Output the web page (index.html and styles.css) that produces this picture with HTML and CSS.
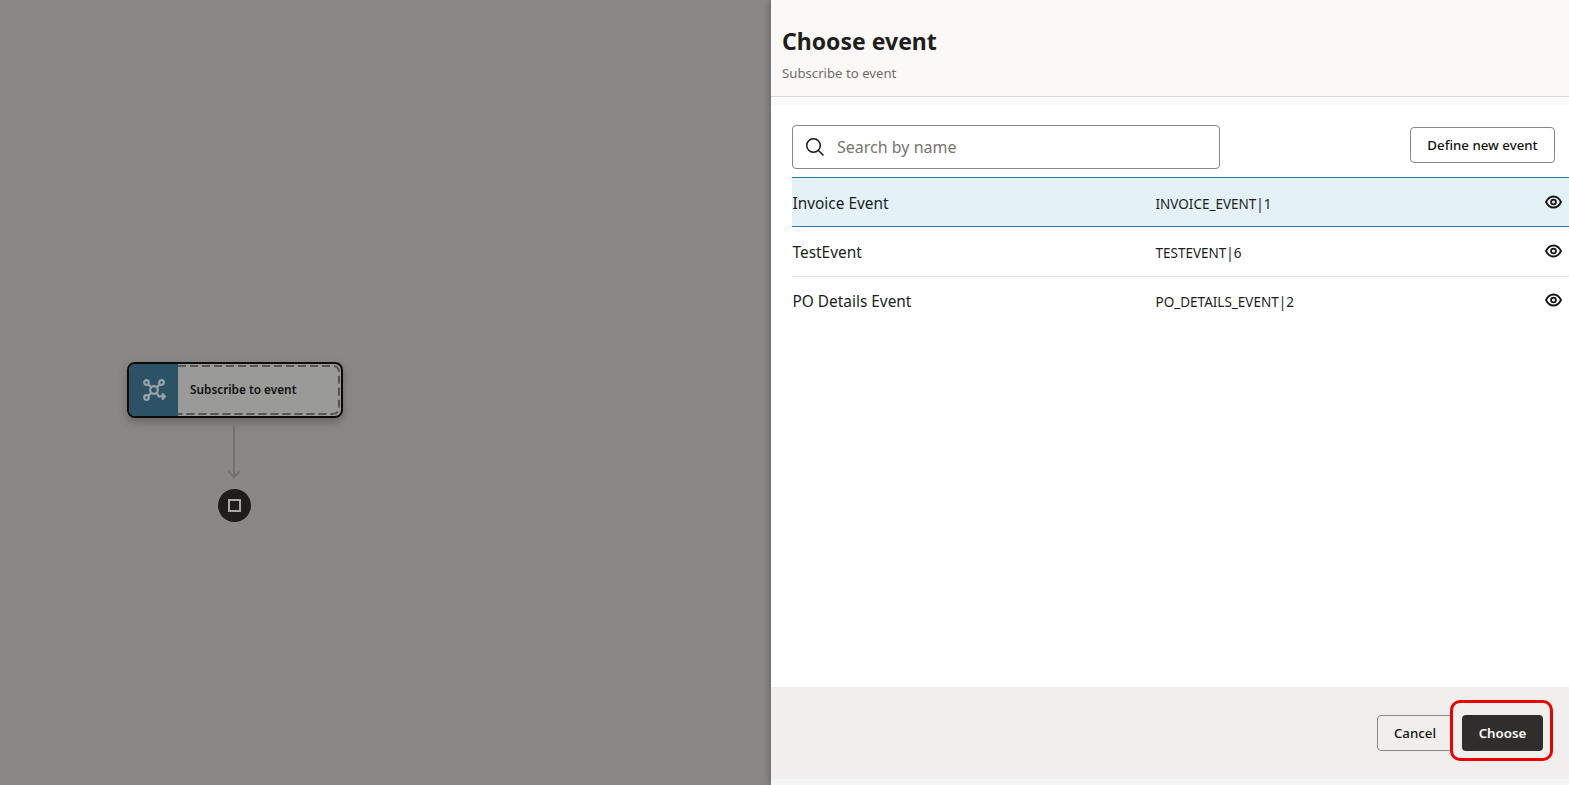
FILE: index.html
```html
<!DOCTYPE html>
<html lang="en">
<head>
<meta charset="utf-8">
<title>Choose event</title>
<link rel="stylesheet" href="styles.css">
</head>
<body>
<div class="app">
  <main class="canvas">
    <div class="node">
      <div class="node-icon">
        <svg width="24" height="24" viewBox="0 0 24 24" fill="none" stroke="#9aa3a6" stroke-width="2.200">
          <circle cx="12" cy="12" r="3.800"/>
          <circle cx="4.500" cy="4.500" r="2.300"/>
          <circle cx="19.500" cy="4.500" r="2.300"/>
          <circle cx="4.500" cy="19.500" r="2.300"/>
          <path d="M6 6l3.400 3.400M18 6l-3.400 3.400M6 18l3.400-3.400M14.600 14.600l2 3.800h6M20 15.500l3 3-3 3"/>
        </svg>
      </div>
      <div class="node-label">
        <svg class="node-dash" width="163" height="52" viewBox="0 0 163 52" fill="none" stroke="#565553" stroke-width="2" stroke-dasharray="8 4">
          <path d="M0 2H155a6 6 0 0 1 6 6V44a6 6 0 0 1-6 6H0"/>
        </svg>
        <span>Subscribe to event</span>
      </div>
    </div>
    <svg class="connector" width="14" height="54" viewBox="0 0 14 54" fill="none" stroke="#737270" stroke-width="2">
      <path d="M7 0v52M1.500 46.500L7 52l5.500-5.500"/>
    </svg>
    <div class="end-node"><span class="end-square"></span></div>
  </main>
  <aside class="panel">
    <header class="panel-head">
      <h1 class="panel-title">Choose event</h1>
      <p class="panel-sub">Subscribe to event</p>
    </header>
    <div class="panel-gap"></div>
    <section class="panel-body">
      <div class="toolbar">
        <label class="search">
          <svg width="20" height="20" viewBox="0 0 20 20" fill="none" stroke="#161513" stroke-width="1.500">
            <circle cx="8.500" cy="8.500" r="6.800"/>
            <path d="M13.500 13.500l5 5"/>
          </svg>
          <span class="search-text">Search by name</span>
        </label>
        <button class="btn btn-define">Define new event</button>
      </div>
      <ul class="list">
        <li class="row row-selected">
          <span class="row-name">Invoice Event</span>
          <span class="row-code">INVOICE_EVENT|1</span>
          <svg class="eye" width="17" height="14" viewBox="0 0 17 14" fill="none" stroke="#161513" stroke-width="1.800"><path d="M1 7c1.800-3.700 4.300-5.500 7.500-5.500S14.200 3.300 16 7c-1.800 3.700-4.300 5.500-7.500 5.500S2.800 10.700 1 7z"/><circle cx="8.500" cy="7" r="2.400"/></svg>
        </li>
        <li class="row row-line">
          <span class="row-name">TestEvent</span>
          <span class="row-code">TESTEVENT|6</span>
          <svg class="eye" width="17" height="14" viewBox="0 0 17 14" fill="none" stroke="#161513" stroke-width="1.800"><path d="M1 7c1.800-3.700 4.300-5.500 7.500-5.500S14.200 3.300 16 7c-1.800 3.700-4.300 5.500-7.500 5.500S2.800 10.700 1 7z"/><circle cx="8.500" cy="7" r="2.400"/></svg>
        </li>
        <li class="row row-last">
          <span class="row-name">PO Details Event</span>
          <span class="row-code">PO_DETAILS_EVENT|2</span>
          <svg class="eye" width="17" height="14" viewBox="0 0 17 14" fill="none" stroke="#161513" stroke-width="1.800"><path d="M1 7c1.800-3.700 4.300-5.500 7.500-5.500S14.200 3.300 16 7c-1.800 3.700-4.300 5.500-7.500 5.500S2.800 10.700 1 7z"/><circle cx="8.500" cy="7" r="2.400"/></svg>
        </li>
      </ul>
    </section>
    <footer class="panel-foot">
      <button class="btn btn-cancel">Cancel</button>
      <button class="btn btn-choose">Choose</button>
      <span class="highlight"></span>
    </footer>
    <div class="panel-end"></div>
  </aside>
</div>
</body>
</html>
```
FILE: styles.css
```css
* { box-sizing: border-box; }
html, body { margin: 0; height: 100%; overflow: hidden; }
body { font-family: "Noto Sans", "Open Sans", sans-serif; color: #161513; }
.app { display: flex; width: 1569px; height: 785px; }

.canvas { position: relative; width: 771px; background: #898886; flex: none; }
.node {
  position: absolute; left: 127px; top: 362px; width: 216px; height: 56px;
  display: flex; border: 2px solid #0c0b0a; border-radius: 8px; overflow: hidden;
  background: #9a9a99; box-shadow: 0 4px 10px rgba(0,0,0,.25);
}
.node-icon { width: 49px; display: flex; align-items: center; justify-content: center; background: #2c5266; flex: none; border-radius: 5px 0 0 5px; }
.node-label {
  position: relative; flex: 1; display: flex; align-items: center; padding: 0 0 2px 12px;
  font-size: 11.800px; font-weight: 600; color: #111;
}
.node-dash { position: absolute; left: 0; top: 0; }
.connector { position: absolute; left: 227px; top: 425px; }
.end-node {
  position: absolute; left: 218px; top: 488.500px; width: 33px; height: 33px; border-radius: 50%;
  background: #1f1d1c; display: flex; align-items: center; justify-content: center;
}
.end-square { width: 13px; height: 13px; border: 2px solid #a9a8a6; }

.panel {
  flex: 1; display: flex; flex-direction: column; background: #fff;
  position: relative; box-shadow: -3px 0 6px rgba(0,0,0,.18);
}
.panel-head { height: 97px; padding: 25px 11px 0; background: #fbf9f8; border-bottom: 1px solid #dcdad8; }
.panel-title { margin: 0; font-size: 23px; line-height: 32px; font-weight: 700; color: #201e1c; }
.panel-sub { margin: 7px 0 0; font-size: 13.200px; line-height: 18px; color: #6f6c69; }
.panel-gap { height: 8px; background: #fafafa; }
.panel-body { flex: 1; padding: 20px 0 0 21px; }
.toolbar { display: flex; justify-content: space-between; align-items: flex-start; padding-right: 14px; height: 44px; }
.search {
  width: 428px; height: 44px; display: flex; align-items: center; gap: 12px; padding-left: 12px;
  border: 1px solid #8a8886; border-radius: 4px;
}
.search-text { font-size: 16px; color: #77746f; }
.btn { font-family: inherit; font-size: 13.300px; font-weight: 500; border-radius: 4px; height: 36px; padding: 0; cursor: pointer; }
.btn-define { width: 145px; margin-top: 2px; background: #fff; color: #161513; border: 1px solid #8a8886; }
.list { list-style: none; margin: 8px 0 0; padding: 0; }
.row { display: flex; align-items: center; height: 49px; position: relative; }
.row-selected { height: 50px; padding-top: 1px; background: #e4f1f7; border-top: 1px solid #227e9e; border-bottom: 1px solid #227e9e; }
.row-line { height: 50px; border-bottom: 1px solid #e3e2e0; }
.row-last { height: 48px; }
.row-name { width: 363.500px; padding: 1px 0 0 0.500px; font-size: 15.400px; color: #201e1c; }
.row-last .row-name { padding-top: 0; }
.row-code { font-size: 13.500px; color: #201e1c; position: relative; top: 1px; }
.eye { position: absolute; left: 753px; top: 17px; }
.row-last .eye { top: 16px; }

.panel-foot {
  position: relative; height: 92px; background: #f1efed;
  display: flex; justify-content: flex-end; align-items: flex-start; gap: 9px;
  padding: 28px 26px 0 0;
}
.btn-cancel { width: 76px; background: transparent; color: #161513; border: 1px solid #8a8886; }
.btn-choose { width: 81px; background: #312d2a; color: #fff; border: 0; font-weight: 600; }
.highlight {
  position: absolute; left: 679px; top: 13px; width: 103px; height: 61px;
  border: 3px solid #ee0000; border-radius: 10px;
}
.panel-end { height: 6px; background: #f5f5f5; }
```
